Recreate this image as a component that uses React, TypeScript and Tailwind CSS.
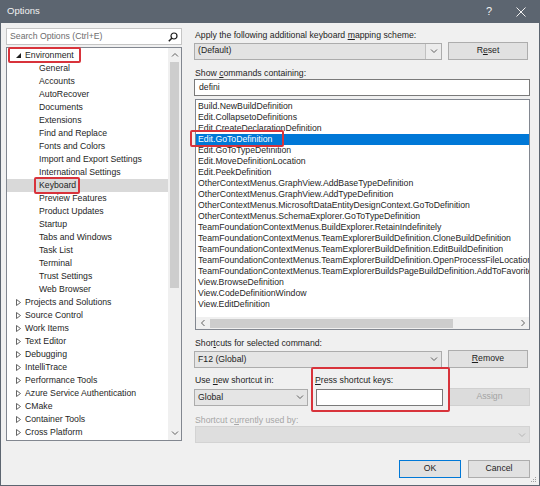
import React from "react";

const envChildren = [
  "General",
  "Accounts",
  "AutoRecover",
  "Documents",
  "Extensions",
  "Find and Replace",
  "Fonts and Colors",
  "Import and Export Settings",
  "International Settings",
  "Keyboard",
  "Preview Features",
  "Product Updates",
  "Startup",
  "Tabs and Windows",
  "Task List",
  "Terminal",
  "Trust Settings",
  "Web Browser",
];

const collapsed = [
  "Projects and Solutions",
  "Source Control",
  "Work Items",
  "Text Editor",
  "Debugging",
  "IntelliTrace",
  "Performance Tools",
  "Azure Service Authentication",
  "CMake",
  "Container Tools",
  "Cross Platform",
];

const commands = [
  "Build.NewBuildDefinition",
  "Edit.CollapsetoDefinitions",
  "Edit.CreateDeclarationDefinition",
  "Edit.GoToDefinition",
  "Edit.GoToTypeDefinition",
  "Edit.MoveDefinitionLocation",
  "Edit.PeekDefinition",
  "OtherContextMenus.GraphView.AddBaseTypeDefinition",
  "OtherContextMenus.GraphView.AddTypeDefinition",
  "OtherContextMenus.MicrosoftDataEntityDesignContext.GoToDefinition",
  "OtherContextMenus.SchemaExplorer.GoToTypeDefinition",
  "TeamFoundationContextMenus.BuildExplorer.RetainIndefinitely",
  "TeamFoundationContextMenus.TeamExplorerBuildDefinition.CloneBuildDefinition",
  "TeamFoundationContextMenus.TeamExplorerBuildDefinition.EditBuildDefinition",
  "TeamFoundationContextMenus.TeamExplorerBuildDefinition.OpenProcessFileLocation",
  "TeamFoundationContextMenus.TeamExplorerBuildsPageBuildDefinition.AddToFavorites",
  "View.BrowseDefinition",
  "View.CodeDefinitionWindow",
  "View.EditDefinition",
];

function Chevron({ dir = "down", color = "#606060" }: { dir?: "down" | "up" | "left" | "right"; color?: string }) {
  const pts: Record<string, string> = {
    down: "1,2.5 4,5.5 7,2.5",
    up: "1,5.5 4,2.5 7,5.5",
    left: "5.5,1 2.5,4 5.5,7",
    right: "2.5,1 5.5,4 2.5,7",
  };
  return (
    <svg width="8" height="8" viewBox="0 0 8 8">
      <polyline points={pts[dir]} fill="none" stroke={color} strokeWidth="1" />
    </svg>
  );
}

function Combo({ text, className = "", disabled = false }: { text: string; className?: string; disabled?: boolean }) {
  return (
    <div
      className={`flex items-center h-[17px] border ${
        disabled ? "border-[#d3d3d3] bg-[#dedede]" : "border-[#acacac] bg-[#e5e5e5]"
      } ${className}`}
    >
      <div className="flex-1 pl-[3px] leading-none text-[#1e1e1e]">{text}</div>
      <div className="w-[15px] flex items-center justify-center">
        <Chevron color={disabled ? "#b5b5b5" : "#606060"} />
      </div>
    </div>
  );
}

function Button({
  children,
  className = "",
  disabled = false,
  primary = false,
}: {
  children: React.ReactNode;
  className?: string;
  disabled?: boolean;
  primary?: boolean;
}) {
  return (
    <div
      className={`flex items-center justify-center h-[18px] border ${
        disabled
          ? "border-[#d0d0d0] bg-[#dcdcdc] text-[#a3a3a3]"
          : primary
          ? "border-[#0078d7] bg-[#e1e1e1] text-[#1e1e1e]"
          : "border-[#adadad] bg-[#e1e1e1] text-[#1e1e1e]"
      } ${className}`}
    >
      {children}
    </div>
  );
}

export default function App() {
  return (
    <div className="relative w-[540px] h-[486px] flex flex-col bg-[#f0f0f0] border-x border-b border-[#5c6570] font-['Liberation_Sans',Arial,sans-serif] text-[8.7px] text-[#1e1e1e] overflow-hidden">
      {/* Title bar */}
      <div className="h-[23px] bg-[#5c6570] flex items-center text-[#f2f2f2] shrink-0">
        <div className="pl-[6px] text-[9.5px] flex-1">Options</div>
        <div className="w-[32px] text-center text-[11px]">?</div>
        <div className="w-[32px] flex justify-center mr-[2px]">
          <svg width="10" height="10" viewBox="0 0 10 10">
            <path d="M0.5 0.5 L9.5 9.5 M9.5 0.5 L0.5 9.5" stroke="#f2f2f2" strokeWidth="1" />
          </svg>
        </div>
      </div>

      {/* Body */}
      <div className="flex flex-1">
        {/* Left column */}
        <div className="pl-[5px] pt-[5px] flex flex-col w-[181px] shrink-0">
          <div className="h-[17px] border border-[#c5c5c5] bg-white flex items-center pl-[3px] pr-[3px]">
            <span className="flex-1 text-[#6d6d6d] leading-none">Search Options (Ctrl+E)</span>
            <svg width="10" height="10" viewBox="0 0 10 10">
              <circle cx="6" cy="4" r="3" fill="none" stroke="#1e1e1e" strokeWidth="1.2" />
              <path d="M4 6 L0.8 9.2" stroke="#1e1e1e" strokeWidth="1.5" />
            </svg>
          </div>
          <div className="mt-[2px] h-[394px] border border-[#828790] bg-white flex">
            <div className="flex-1 pt-[1px] overflow-hidden">
              <div className="h-[13px] flex items-center">
                <div className="w-[18px] flex justify-end pr-[4px]">
                  <svg width="5" height="5" viewBox="0 0 5 5">
                    <polygon points="5,0 5,5 0,5" fill="#1e1e1e" />
                  </svg>
                </div>
                <span className="whitespace-nowrap">Environment</span>
              </div>
              {envChildren.map((c) => (
                <div
                  key={c}
                  className={`h-[13px] flex items-center pl-[32px] whitespace-nowrap ${
                    c === "Keyboard" ? "bg-[#d9d9d9]" : ""
                  }`}
                >
                  {c}
                </div>
              ))}
              {collapsed.map((c) => (
                <div key={c} className="h-[13px] flex items-center">
                  <div className="w-[18px] flex justify-end pr-[4px]">
                    <svg width="5" height="7" viewBox="0 0 5 7">
                      <polygon points="0.5,0.5 4.5,3.5 0.5,6.5" fill="none" stroke="#555" strokeWidth="0.9" />
                    </svg>
                  </div>
                  <span className="whitespace-nowrap">{c}</span>
                </div>
              ))}
            </div>
            {/* vertical scrollbar */}
            <div className="w-[13px] bg-[#f0f0f0] flex flex-col items-center">
              <div className="h-[13px] flex items-center justify-center">
                <Chevron dir="up" />
              </div>
              <div className="w-[9px] h-[226px] mt-[1px] bg-[#cdcdcd]" />
              <div className="flex-1" />
              <div className="h-[13px] flex items-center justify-center mb-[1px]">
                <Chevron dir="down" />
              </div>
            </div>
          </div>
        </div>

        {/* Right column */}
        <div className="ml-[12px] w-[336px] pt-[6px] flex flex-col">
          <div className="h-[12px] leading-[12px] pl-[1px]">
            Apply the following additional keyboard <span className="underline">m</span>apping scheme:
          </div>
          <div className="mt-[1px] flex items-center">
            <div className="w-[248px] h-[17px] border border-[#acacac] bg-[#ececec] flex">
              <div className="flex-1 border-r border-[#c0c0c0] bg-[#e3e3e3] flex items-center pl-[3px]">
                (Default)
              </div>
              <div className="w-[15px] flex items-center justify-center">
                <Chevron />
              </div>
            </div>
            <Button className="ml-[6px] w-[80px]">
              <span>
                R<span className="underline">e</span>set
              </span>
            </Button>
          </div>

          <div className="mt-[7px] h-[12px] leading-[12px] pl-[1px]">
            Show <span className="underline">c</span>ommands containing:
          </div>
          <div className="h-[17px] border border-[#7a7a7a] bg-white flex items-center pl-[4px]">defini</div>

          <div className="mt-[3px] ml-[1px] h-[231px] border border-[#828790] bg-white flex flex-col">
            <div className="flex-1 pt-[1px] overflow-hidden">
              {commands.map((c) => (
                <div
                  key={c}
                  className={`h-[11px] leading-[11px] pl-[2px] whitespace-nowrap ${
                    c === "Edit.GoToDefinition" ? "bg-[#0078d7] text-white" : ""
                  }`}
                >
                  {c}
                </div>
              ))}
            </div>
            <div className="h-[12px] bg-[#f0f0f0] flex items-center">
              <div className="w-[13px] flex justify-center">
                <Chevron dir="left" />
              </div>
              <div className="ml-[1px] w-[243px] h-[9px] bg-[#cdcdcd]" />
              <div className="flex-1" />
              <div className="w-[13px] flex justify-center">
                <Chevron dir="right" />
              </div>
            </div>
          </div>

          <div className="mt-[7px] h-[12px] leading-[12px] pl-[1px]">
            Shor<span className="underline">t</span>cuts for selected command:
          </div>
          <div className="mt-[1px] flex items-center">
            <Combo text="F12 (Global)" className="w-[248px]" />
            <Button className="ml-[6px] w-[80px]">
              <span>
                <span className="underline">R</span>emove
              </span>
            </Button>
          </div>

          <div className="mt-[6px] h-[12px] leading-[12px] flex">
            <div className="w-[121px] pl-[1px]">
              Use <span className="underline">n</span>ew shortcut in:
            </div>
            <div>
              <span className="underline">P</span>ress shortcut keys:
            </div>
          </div>
          <div className="mt-[2px] flex items-center">
            <Combo text="Global" className="w-[114px]" />
            <div className="ml-[8px] w-[127px] h-[17px] border border-[#7a7a7a] bg-white" />
            <Button disabled className="ml-[6px] w-[81px] h-[17px]">
              Assign
            </Button>
          </div>

          <div className="mt-[8px] h-[12px] leading-[12px] pl-[1px] text-[#a6a6a6]">
            Shortcut c<span className="underline">u</span>rrently used by:
          </div>
          <Combo text="" disabled className="ml-[1px] w-[335px]" />

          <div className="mt-[17px] flex justify-end gap-[7px]">
            <Button primary className="w-[62px]">
              OK
            </Button>
            <Button className="w-[62px]">Cancel</Button>
          </div>
        </div>
      </div>

      {/* resize grip */}
      <div className="absolute right-[2px] bottom-[2px]">
        <svg width="8" height="8" viewBox="0 0 8 8">
          <rect x="6" y="2" width="1" height="1" fill="#a0a0a0" />
          <rect x="4" y="4" width="1" height="1" fill="#a0a0a0" />
          <rect x="6" y="4" width="1" height="1" fill="#a0a0a0" />
          <rect x="2" y="6" width="1" height="1" fill="#a0a0a0" />
          <rect x="4" y="6" width="1" height="1" fill="#a0a0a0" />
          <rect x="6" y="6" width="1" height="1" fill="#a0a0a0" />
        </svg>
      </div>

      {/* red annotation boxes */}
      <div className="absolute left-[7px] top-[47px] w-[73px] h-[16px] border-2 border-[#d8333b] rounded-[2px]" />
      <div className="absolute left-[33px] top-[177px] w-[46px] h-[17px] border-2 border-[#d8333b] rounded-[2px]" />
      <div className="absolute left-[189px] top-[130px] w-[94px] h-[17px] border-2 border-[#d8333b] rounded-[2px]" />
      <div className="absolute left-[310px] top-[367px] w-[139px] h-[45px] border-2 border-[#d8333b] rounded-[2px]" />
    </div>
  );
}
